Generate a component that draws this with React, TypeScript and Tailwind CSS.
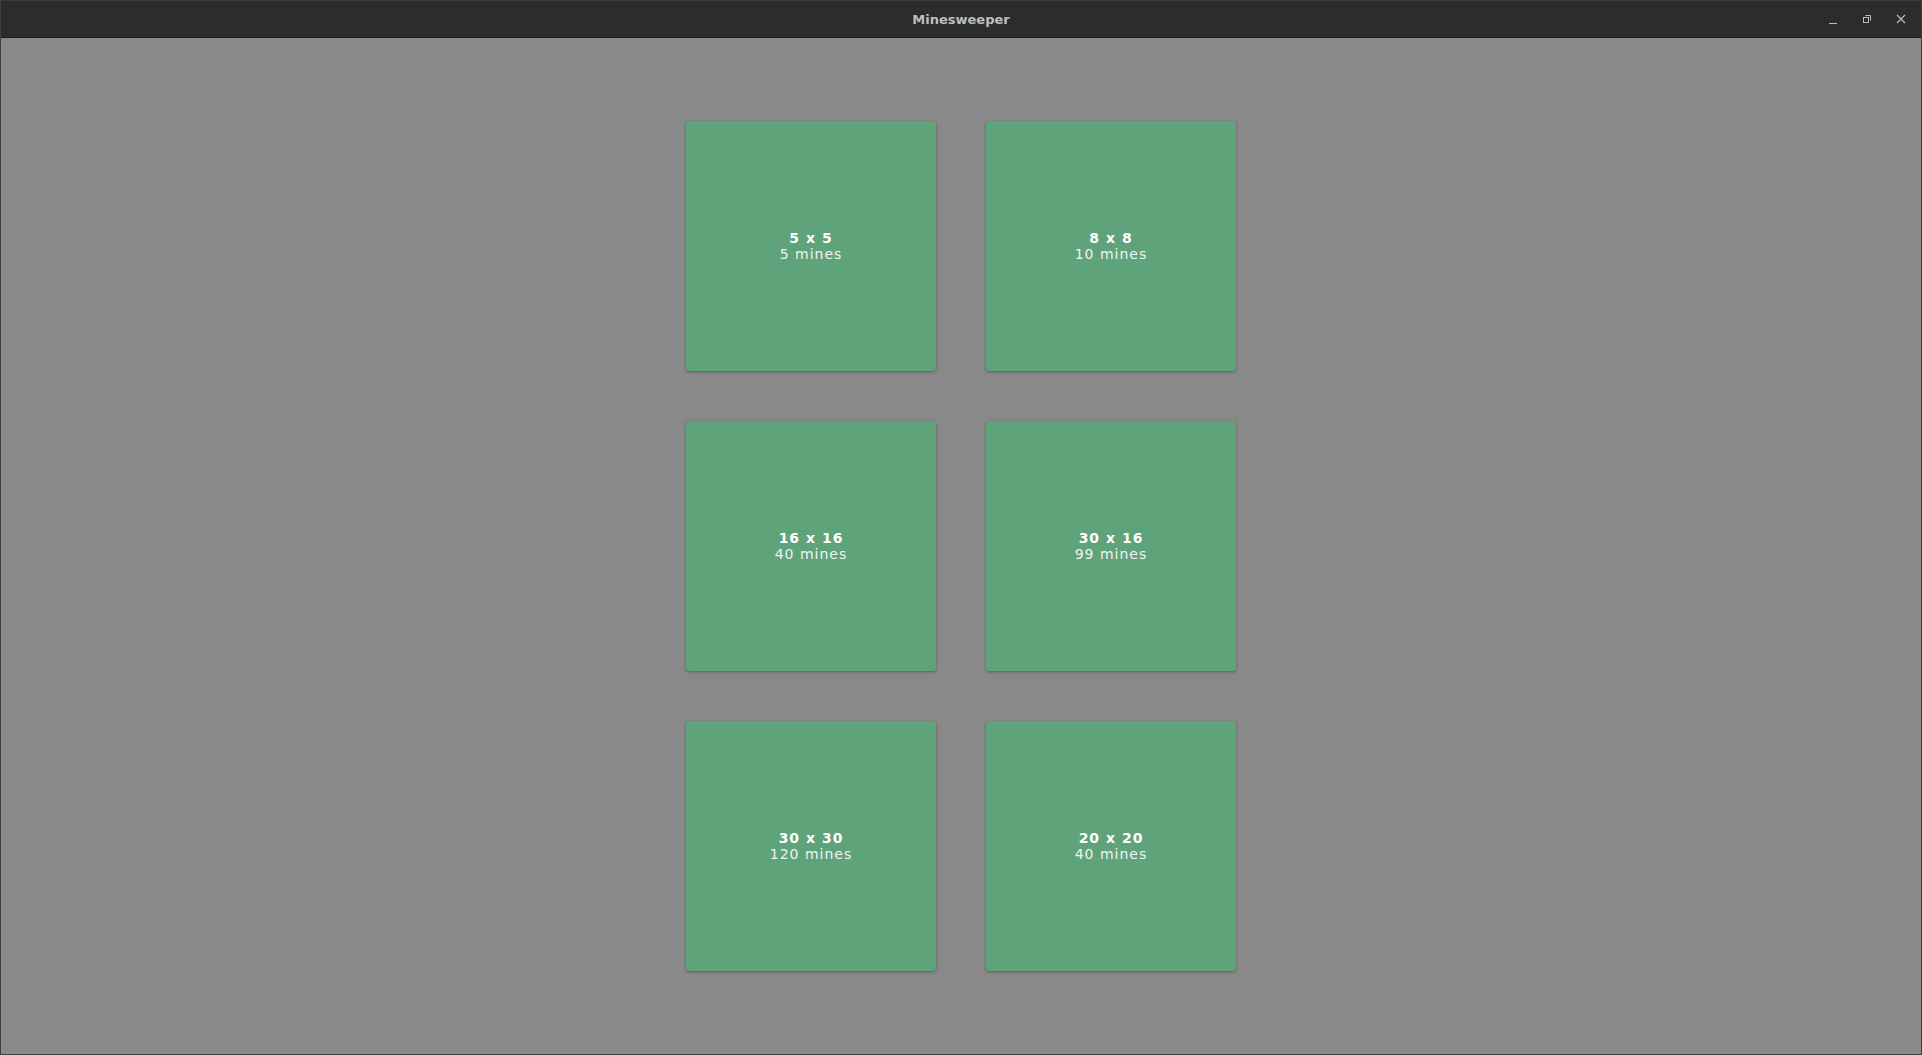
const LEVELS = [
  { size: "5 x 5", mines: "5 mines" },
  { size: "8 x 8", mines: "10 mines" },
  { size: "16 x 16", mines: "40 mines" },
  { size: "30 x 16", mines: "99 mines" },
  { size: "30 x 30", mines: "120 mines" },
  { size: "20 x 20", mines: "40 mines" },
]

function TitleBar() {
  return (
    <div className="relative flex h-[38px] shrink-0 items-center justify-center border-b border-[#1e1e1e] bg-[#2c2c2c] pt-[3px] shadow-[inset_0_1px_0_#3c3c3c]">
      <span className="font-['DejaVu_Sans',sans-serif] text-[13px] font-bold text-[#bfbfbf]">Minesweeper</span>
      <div className="absolute right-[13px] top-0 flex h-full items-center gap-[20px] text-[#bdbdbd]">
        <svg width="14" height="14" viewBox="0 0 14 14" className="mt-[2px]">
          <line x1="3" y1="10.5" x2="11" y2="10.5" stroke="currentColor" strokeWidth="1" />
        </svg>
        <svg width="14" height="14" viewBox="0 0 14 14">
          <rect x="3.5" y="5.5" width="5" height="5" fill="none" stroke="currentColor" strokeWidth="1" />
          <path d="M5.5 3.5h5v5" fill="none" stroke="currentColor" strokeWidth="1" />
        </svg>
        <svg width="14" height="14" viewBox="0 0 14 14">
          <path d="M3 3l8 8M11 3l-8 8" stroke="currentColor" strokeWidth="1.2" />
        </svg>
      </div>
    </div>
  )
}

export default function App() {
  return (
    <div className="flex h-[1055px] w-[1922px] flex-col border border-[#3d3d3d] border-t-0 bg-[#898989]">
      <TitleBar />
      <div className="flex flex-1 items-center justify-center">
        <div className="grid grid-cols-[250px_250px] gap-[50px]">
          {LEVELS.map((l) => (
            <button
              key={l.size + l.mines}
              className="flex h-[250px] w-[250px] flex-col items-center justify-center rounded-[3px] bg-[#5fa37a] font-['DejaVu_Sans',sans-serif] text-[14px] leading-[16px] tracking-[1px] text-white shadow-[0_1px_3px_rgba(0,0,0,0.35)]"
            >
              <span className="font-bold">{l.size}</span>
              <span className="text-[#f2f2f2]">{l.mines}</span>
            </button>
          ))}
        </div>
      </div>
    </div>
  )
}
